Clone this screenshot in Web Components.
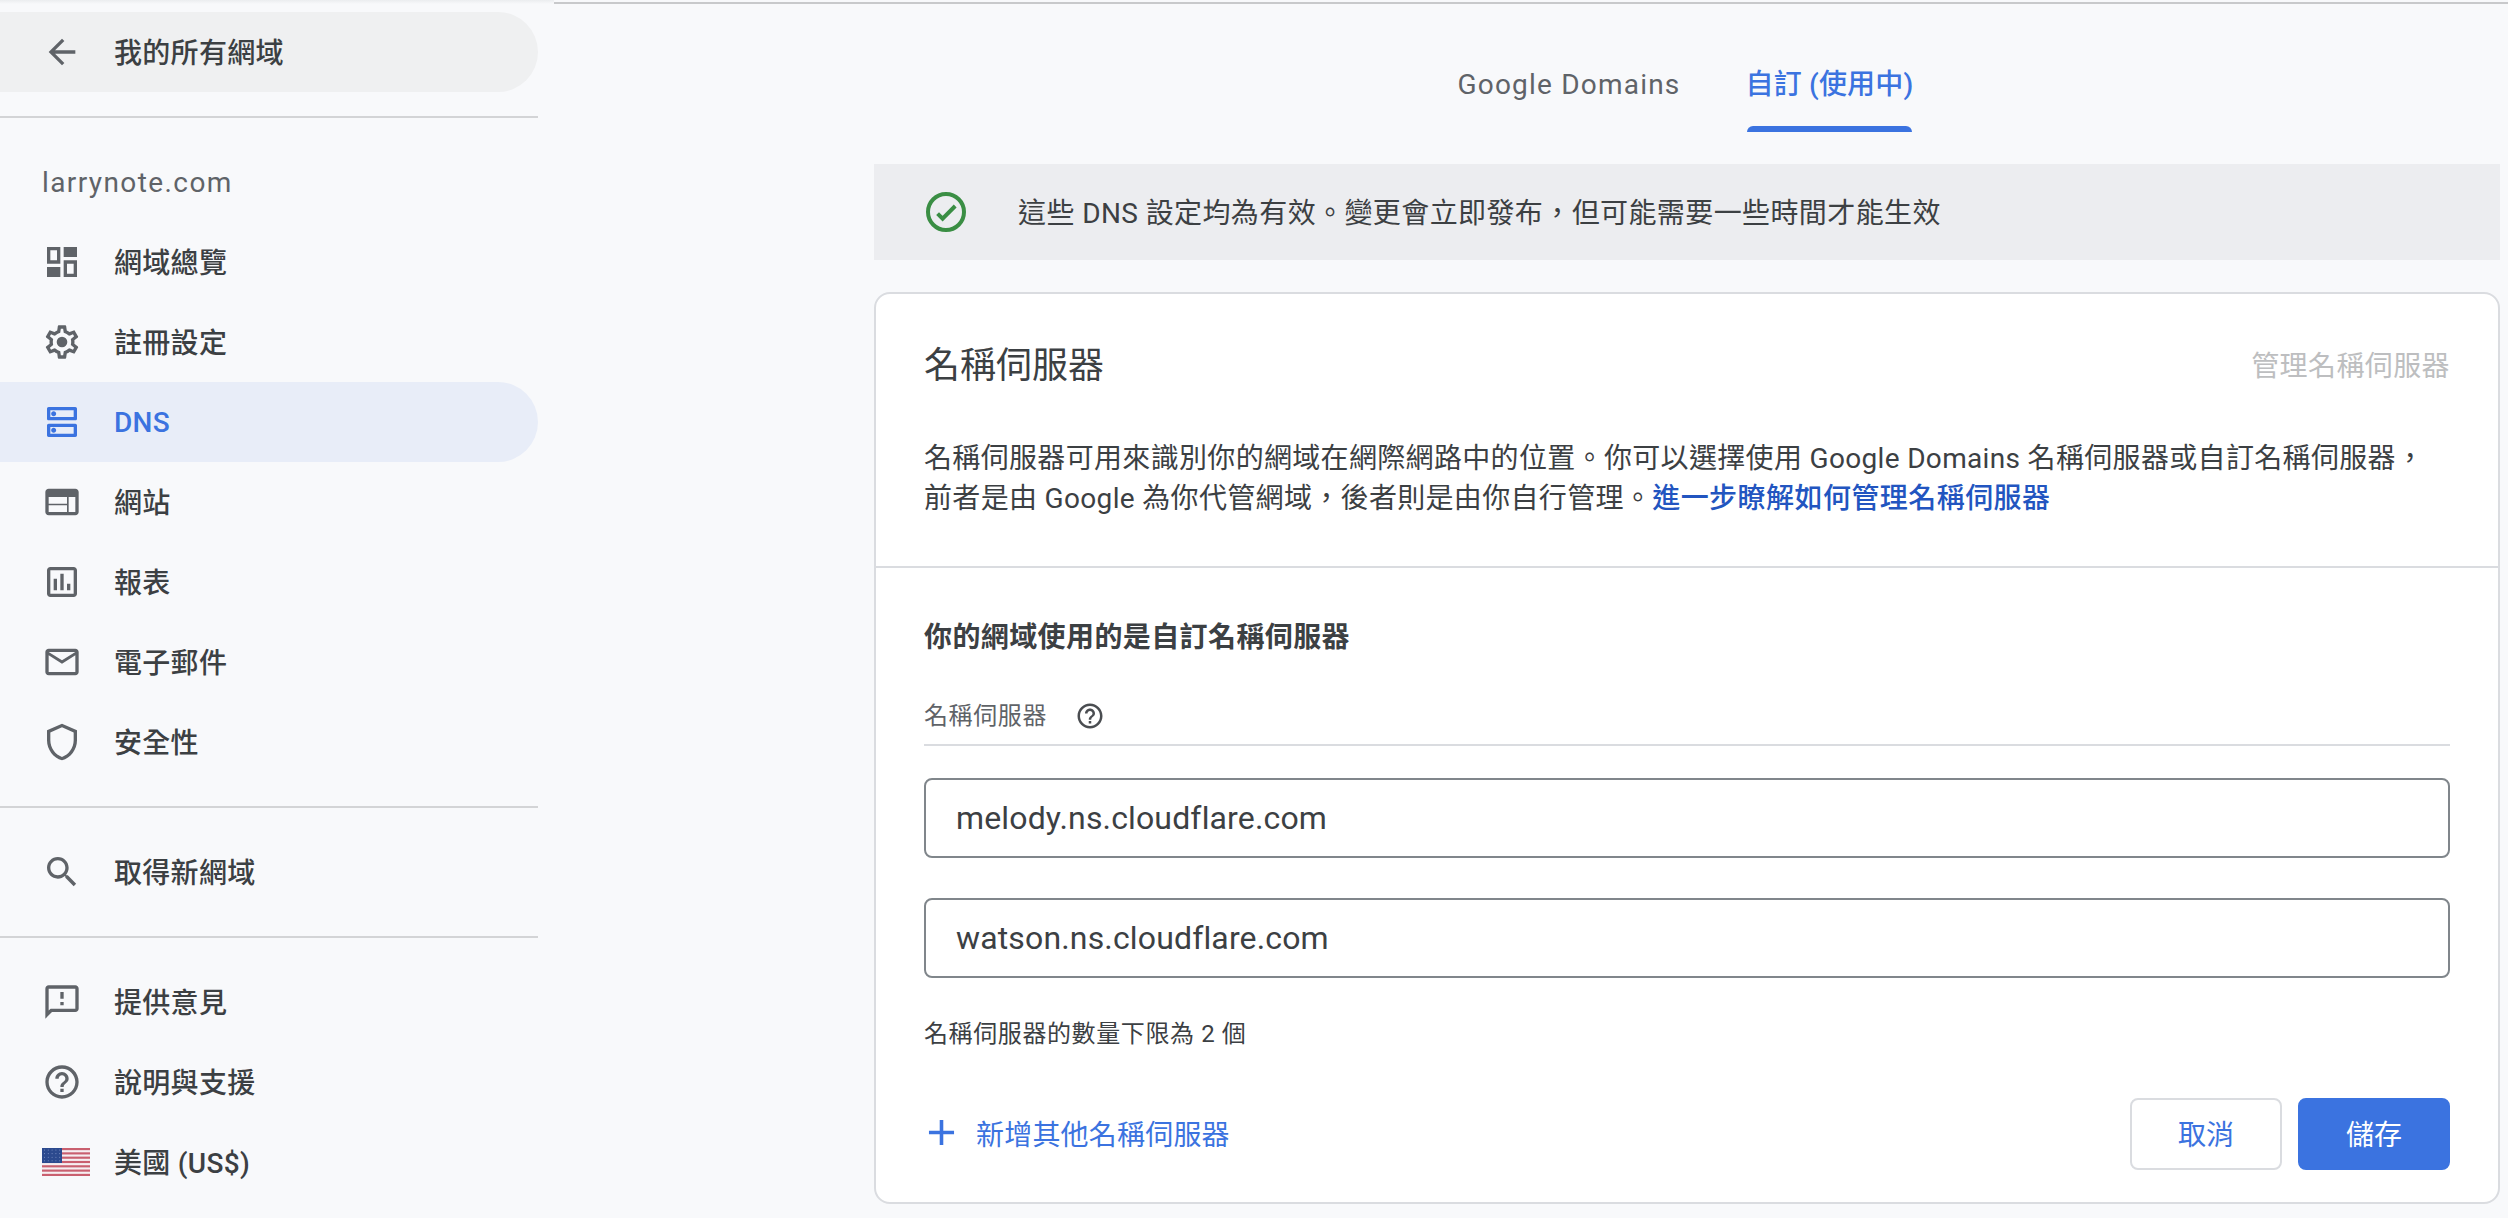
<!DOCTYPE html>
<html lang="zh-Hant">
<head>
<meta charset="utf-8">
<title>DNS</title>
<style>
  html, body { margin: 0; padding: 0; height: 100%; background: #f8f9fb; }
  body {
    font-family: Roboto, "Noto Sans CJK TC", sans-serif;
    font-size: 28px;
    color: #3c4043;
    overflow: hidden;
  }
</style>
</head>
<body>
<ds-app>
  <ds-sidebar slot="side">
    <ds-nav-item icon="arrow_back" variant="back">我的所有網域</ds-nav-item>
    <ds-rule></ds-rule>
    <ds-domain-name>larrynote.com</ds-domain-name>
    <ds-nav-item icon="dashboard">網域總覽</ds-nav-item>
    <ds-nav-item icon="settings">註冊設定</ds-nav-item>
    <ds-nav-item icon="dns" active>DNS</ds-nav-item>
    <ds-nav-item icon="web">網站</ds-nav-item>
    <ds-nav-item icon="assessment">報表</ds-nav-item>
    <ds-nav-item icon="mail">電子郵件</ds-nav-item>
    <ds-nav-item icon="shield">安全性</ds-nav-item>
    <ds-rule></ds-rule>
    <ds-nav-item icon="search">取得新網域</ds-nav-item>
    <ds-rule></ds-rule>
    <ds-nav-item icon="feedback">提供意見</ds-nav-item>
    <ds-nav-item icon="help">說明與支援</ds-nav-item>
    <ds-nav-item icon="flag">美國 (US$)</ds-nav-item>
  </ds-sidebar>

  <ds-tabs>
    <ds-tab>Google Domains</ds-tab>
    <ds-tab active>自訂 (使用中)</ds-tab>
  </ds-tabs>

  <ds-banner>這些 DNS 設定均為有效。變更會立即發布，但可能需要一些時間才能生效</ds-banner>

  <ds-card>
    <span slot="title">名稱伺服器</span>
    <span slot="action">管理名稱伺服器</span>
    <span slot="desc">名稱伺服器可用來識別你的網域在網際網路中的位置。你可以選擇使用 Google Domains 名稱伺服器或自訂名稱伺服器，<br>前者是由 Google 為你代管網域，後者則是由你自行管理。<ds-link>進一步瞭解如何管理名稱伺服器</ds-link></span>
    <ds-ns-form>
      <span slot="heading">你的網域使用的是自訂名稱伺服器</span>
      <span slot="label">名稱伺服器</span>
      <ds-field slot="fields">melody.ns.cloudflare.com</ds-field>
      <ds-field slot="fields">watson.ns.cloudflare.com</ds-field>
      <span slot="hint">名稱伺服器的數量下限為 2 個</span>
      <ds-add slot="add">新增其他名稱伺服器</ds-add>
      <ds-button slot="buttons">取消</ds-button>
      <ds-button slot="buttons" primary>儲存</ds-button>
    </ds-ns-form>
  </ds-card>
</ds-app>

<script>
const ICONS = {
  arrow_back: '<path d="M20 11H7.83l5.59-5.59L12 4l-8 8 8 8 1.41-1.41L7.83 13H20v-2z"/>',
  dashboard: '<path fill-rule="evenodd" d="M3 3h8v10H3zM5 5v6h4V5z"/><path d="M13 3h8v6h-8zM3 15h8v6H3z"/><path fill-rule="evenodd" d="M13 11h8v10h-8zM15 13v6h4v-6z"/>',
  settings: '<path d="M19.43 12.98c.04-.32.07-.64.07-.98 0-.34-.03-.66-.07-.98l2.11-1.65c.19-.15.24-.42.12-.64l-2-3.46c-.09-.16-.26-.25-.44-.25-.06 0-.12.01-.17.03l-2.49 1c-.52-.4-1.08-.73-1.69-.98l-.38-2.65C14.46 2.18 14.25 2 14 2h-4c-.25 0-.46.18-.49.42l-.38 2.65c-.61.25-1.17.59-1.69.98l-2.49-1c-.06-.02-.12-.03-.18-.03-.17 0-.34.09-.43.25l-2 3.46c-.13.22-.07.49.12.64l2.11 1.65c-.04.32-.07.65-.07.98 0 .33.03.66.07.98l-2.11 1.65c-.19.15-.24.42-.12.64l2 3.46c.09.16.26.25.44.25.06 0 .12-.01.17-.03l2.49-1c.52.4 1.08.73 1.69.98l.38 2.65c.03.24.24.42.49.42h4c.25 0 .46-.18.49-.42l.38-2.65c.61-.25 1.17-.59 1.69-.98l2.49 1c.06.02.12.03.18.03.17 0 .34-.09.43-.25l2-3.46c.12-.22.07-.49-.12-.64l-2.11-1.65zm-1.98-1.71c.04.31.05.52.05.73 0 .21-.02.43-.05.73l-.14 1.13.89.7 1.08.84-.7 1.21-1.27-.51-1.04-.42-.9.68c-.43.32-.84.56-1.25.73l-1.06.43-.16 1.13-.2 1.35h-1.4l-.19-1.35-.16-1.13-1.06-.43c-.43-.18-.83-.41-1.23-.71l-.91-.7-1.06.43-1.27.51-.7-1.21 1.08-.84.89-.7-.14-1.13c-.03-.31-.05-.54-.05-.74s.02-.43.05-.73l.14-1.13-.89-.7-1.08-.84.7-1.21 1.27.51 1.04.42.9-.68c.43-.32.84-.56 1.25-.73l1.06-.43.16-1.13.2-1.35h1.39l.19 1.35.16 1.13 1.06.43c.43.18.83.41 1.23.71l.91.7 1.06-.43 1.27-.51.7 1.21-1.07.85-.89.7.14 1.13z"/><circle cx="12" cy="12" r="3.2"/>',
  dns: '<path d="M19 15v4H5v-4h14m1-2H4c-.55 0-1 .45-1 1v6c0 .55.45 1 1 1h16c.55 0 1-.45 1-1v-6c0-.55-.45-1-1-1zM7 18.5c-.82 0-1.5-.67-1.5-1.5s.68-1.5 1.5-1.5 1.5.67 1.5 1.5-.67 1.5-1.5 1.5zM19 5v4H5V5h14m1-2H4c-.55 0-1 .45-1 1v6c0 .55.45 1 1 1h16c.55 0 1-.45 1-1V4c0-.55-.45-1-1-1zM7 8.5c-.82 0-1.5-.67-1.5-1.5S6.18 5.5 7 5.5s1.5.68 1.5 1.5S7.83 8.5 7 8.5z"/>',
  web: '<path d="M20 4H4c-1.1 0-1.99.9-1.99 2L2 18c0 1.1.9 2 2 2h16c1.1 0 2-.9 2-2V6c0-1.1-.9-2-2-2zM15 18H4v-4h11v4zm0-5H4V9h11v4zm5 5h-4V9h4v9z"/>',
  assessment: '<path d="M19 3H5c-1.1 0-2 .9-2 2v14c0 1.1.9 2 2 2h14c1.1 0 2-.9 2-2V5c0-1.1-.9-2-2-2zm0 16H5V5h14v14z"/><path d="M7 10h2v7H7zm4-3h2v10h-2zm4 6h2v4h-2z"/>',
  mail: '<path d="M20 4H4c-1.1 0-1.99.9-1.99 2L2 18c0 1.1.9 2 2 2h16c1.1 0 2-.9 2-2V6c0-1.1-.9-2-2-2zm0 14H4V8l8 5 8-5v10zm-8-7L4 6h16l-8 5z"/>',
  shield: '<path d="M12 1L3 5v6c0 5.55 3.84 10.74 9 12 5.16-1.26 9-6.45 9-12V5l-9-4zm7 10c0 4.52-2.98 8.69-7 9.93-4.02-1.24-7-5.41-7-9.93V6.3l7-3.11 7 3.11V11z"/>',
  search: '<path d="M15.5 14h-.79l-.28-.27C15.41 12.59 16 11.11 16 9.5 16 5.91 13.09 3 9.5 3S3 5.91 3 9.5 5.91 16 9.5 16c1.61 0 3.09-.59 4.23-1.57l.27.28v.79l5 4.99L20.49 19l-4.99-5zm-6 0C7.01 14 5 11.99 5 9.5S7.01 5 9.5 5 14 7.01 14 9.5 11.99 14 9.5 14z"/>',
  feedback: '<path d="M20 2H4c-1.1 0-1.99.9-1.99 2L2 22l4-4h14c1.1 0 2-.9 2-2V4c0-1.1-.9-2-2-2zm0 14H5.17L4 17.17V4h16v12zm-9-4h2v2h-2zm0-6h2v4h-2z"/>',
  help: '<path d="M11 18h2v-2h-2v2zm1-16C6.48 2 2 6.48 2 12s4.48 10 10 10 10-4.48 10-10S17.52 2 12 2zm0 18c-4.41 0-8-3.59-8-8s3.59-8 8-8 8 3.59 8 8-3.59 8-8 8zm0-14c-2.21 0-4 1.79-4 4h2c0-1.1.9-2 2-2s2 .9 2 2c0 2-3 1.75-3 5h2c0-2.25 3-2.5 3-5 0-2.21-1.79-4-4-4z"/>',
  check: '<circle cx="12" cy="12" r="9" fill="none" stroke="currentColor" stroke-width="2"/><path d="M7.8 12.8l2.5 2.5 6.3-6.3" fill="none" stroke="currentColor" stroke-width="2"/>',
  add: '<path d="M19 13h-6v6h-2v-6H5v-2h6V5h2v6h6v2z"/>'
};
const FLAG = (() => {
  let s = '<svg width="48" height="28" viewBox="0 0 48 28" aria-hidden="true"><rect width="48" height="28" fill="#f6eff1"/>';
  for (let i = 0; i < 7; i++) s += `<rect y="${(i * 2 * 28 / 13).toFixed(2)}" width="48" height="${(28 / 13).toFixed(2)}" fill="#c9606f"/>`;
  s += '<rect width="20" height="15" fill="#2c4a8e"/>';
  for (let r = 0; r < 4; r++) for (let c = 0; c < 5; c++) s += `<circle cx="${2.5 + c * 3.8}" cy="${2 + r * 3.6}" r=".55" fill="#7f93c4"/>`;
  return s + '</svg>';
})();
const svgIcon = (name, size) => `<svg width="${size}" height="${size}" viewBox="0 0 24 24" fill="currentColor" aria-hidden="true">${ICONS[name]}</svg>`;

function define(tag, css, html, init) {
  customElements.define(tag, class extends HTMLElement {
    constructor() {
      super();
      this.attachShadow({ mode: 'open' }).innerHTML = `<style>${css}</style>${html}`;
    }
    connectedCallback() { if (init) init(this); }
  });
}

define('ds-app', `
  :host { display: flex; height: 1218px; box-sizing: border-box; }
  .side { flex: 0 0 538px; display: block; }
  .main { flex: 1; min-width: 0; box-sizing: border-box; padding: 0 8px 0 336px; position: relative; }
  .line { position: absolute; top: 2px; left: 16px; right: 0; height: 2px; background: #c8c9cb; }
  .side-top { position: absolute; top: 0; left: 0; width: 554px; height: 4px; background: linear-gradient(#ebedef, #f8f9fb); }
`, `<div class="side-top"></div><div class="side"><slot name="side"></slot></div><div class="main"><div class="line"></div><slot></slot></div>`);

define('ds-sidebar', `:host { display: block; padding-top: 12px; color: #3c4043; }`, `<slot></slot>`);

define('ds-rule', `:host { display: block; height: 2px; background: #d3d4d6; margin: 24px 0; }`, ``);

define('ds-domain-name', `
  :host { display: block; height: 104px; box-sizing: border-box; padding: 45px 0 0 42px; line-height: 40px;
    font-size: 28px; color: #5f6368; letter-spacing: 1.4px; margin-top: -24px; }
`, `<slot></slot>`);

define('ds-nav-item', `
  :host { display: flex; align-items: center; height: 80px; padding-left: 42px; box-sizing: border-box;
    border-radius: 0 40px 40px 0; font-size: 28px; font-weight: 500; color: #3c4043; letter-spacing: .3px; }
  :host([active]) { background: #e8edf8; color: #3b73e0; }
  :host([variant="back"]) { background: #eff0f1; }
  .i { flex: 0 0 73px; display: flex; color: #5f6368; }
  :host([active]) .i { color: #3b73e0; }
  .t { margin-top: -2px; margin-left: -1px; }
  :host([active]) .t { margin-top: 0; }
`, `<span class="i"></span><span class="t"><slot></slot></span>`, el => {
  const n = el.getAttribute('icon');
  el.shadowRoot.querySelector('.i').innerHTML = n === 'flag' ? FLAG : svgIcon(n, 40);
});

define('ds-tabs', `
  :host { display: flex; justify-content: center; gap: 65px; height: 132px; padding: 4px 3px 0 0; box-sizing: border-box; }
`, `<slot></slot>`);

define('ds-tab', `
  :host { display: block; position: relative; height: 128px; box-sizing: border-box; padding-top: 61px; line-height: 40px;
    font-size: 28px; color: #5f6368; font-weight: 400; letter-spacing: 1.2px; }
  :host([active]) { color: #3b73e0; font-weight: 500; letter-spacing: .2px; }
  :host([active])::after { content: ""; position: absolute; left: 2px; right: 2px; bottom: 0; height: 6px;
    background: #3b73e0; border-radius: 6px 6px 0 0; }
`, `<slot></slot>`);

define('ds-banner', `
  :host { display: flex; align-items: center; height: 96px; margin-top: 32px; padding-left: 48px; background: #ecedf0;
    font-size: 28px; color: #3c4043; box-sizing: border-box; letter-spacing: .4px; }
  .i { flex: 0 0 96px; display: flex; color: #3a8e44; }
  .t { margin-top: -2px; }
`, `<span class="i">${svgIcon('check', 48)}</span><span class="t"><slot></slot></span>`);

define('ds-card', `
  :host { display: block; margin-top: 32px; background: #fff; border: 2px solid #dadce0; border-radius: 16px; box-sizing: border-box; }
  .head { padding: 46px 48px 47px; border-bottom: 2px solid #dadce0; }
  .row { display: flex; justify-content: space-between; align-items: center; height: 48px; margin-bottom: 51px; }
  .title { font-size: 36px; color: #3c4043; margin-top: -5px; }
  .action { font-size: 28px; color: #bdbec0; letter-spacing: .4px; }
  .desc { font-size: 28px; line-height: 40px; color: #3c4043; white-space: nowrap; letter-spacing: .33px; }
`, `<div class="head"><div class="row"><span class="title"><slot name="title"></slot></span><span class="action"><slot name="action"></slot></span></div><div class="desc"><slot name="desc"></slot></div></div><slot></slot>`);

define('ds-link', `:host { display: inline; color: #2255c0; font-weight: 500; letter-spacing: .45px; }`, `<slot></slot>`);

define('ds-ns-form', `
  :host { display: block; padding: 50px 48px 32px; }
  .heading { font-size: 28px; line-height: 40px; font-weight: 700; color: #3c4043; letter-spacing: .4px; }
  .label { display: flex; align-items: center; margin-top: 39px; height: 32px; padding-bottom: 15px; border-bottom: 2px solid #dadce0;
    font-size: 24px; color: #5f6368; box-sizing: content-box; letter-spacing: .6px; }
  .label svg { margin-left: 28px; margin-top: 5px; color: #4a4d51; }
  .fields { display: flex; flex-direction: column; gap: 40px; margin-top: 32px; }
  .hint { font-size: 24px; line-height: 32px; margin-top: 40px; color: #3c4043; letter-spacing: .6px; }
  .foot { display: flex; justify-content: space-between; align-items: center; margin-top: 48px; height: 72px; }
  .btns { display: flex; gap: 16px; }
`, `<div class="heading"><slot name="heading"></slot></div>
<div class="label"><span><slot name="label"></slot></span>${svgIcon('help', 30)}</div>
<div class="fields"><slot name="fields"></slot></div>
<div class="hint"><slot name="hint"></slot></div>
<div class="foot"><slot name="add"></slot><div class="btns"><slot name="buttons"></slot></div></div>`);

define('ds-field', `
  :host { display: flex; align-items: center; height: 80px; box-sizing: border-box; border: 2px solid #80868b; border-radius: 8px;
    padding-left: 30px; font-size: 32px; color: #3c4043; letter-spacing: .15px; }
`, `<slot></slot>`);

define('ds-add', `
  :host { display: flex; align-items: center; font-size: 28px; color: #3b73e0; margin-left: -4px; letter-spacing: .2px; }
  svg { margin-right: 13px; margin-top: -4px; }
  span { margin-top: -2px; }
`, `${svgIcon('add', 43)}<span><slot></slot></span>`);

define('ds-button', `
  :host { display: flex; align-items: center; justify-content: center; width: 152px; height: 72px; box-sizing: border-box;
    border: 2px solid #dadce0; border-radius: 8px; background: #fff; color: #3b73e0; font-size: 28px; padding-bottom: 2px; }
  :host([primary]) { background: #3b73e0; border-color: #3b73e0; color: #fff; }
`, `<slot></slot>`);
</script>
</body>
</html>
